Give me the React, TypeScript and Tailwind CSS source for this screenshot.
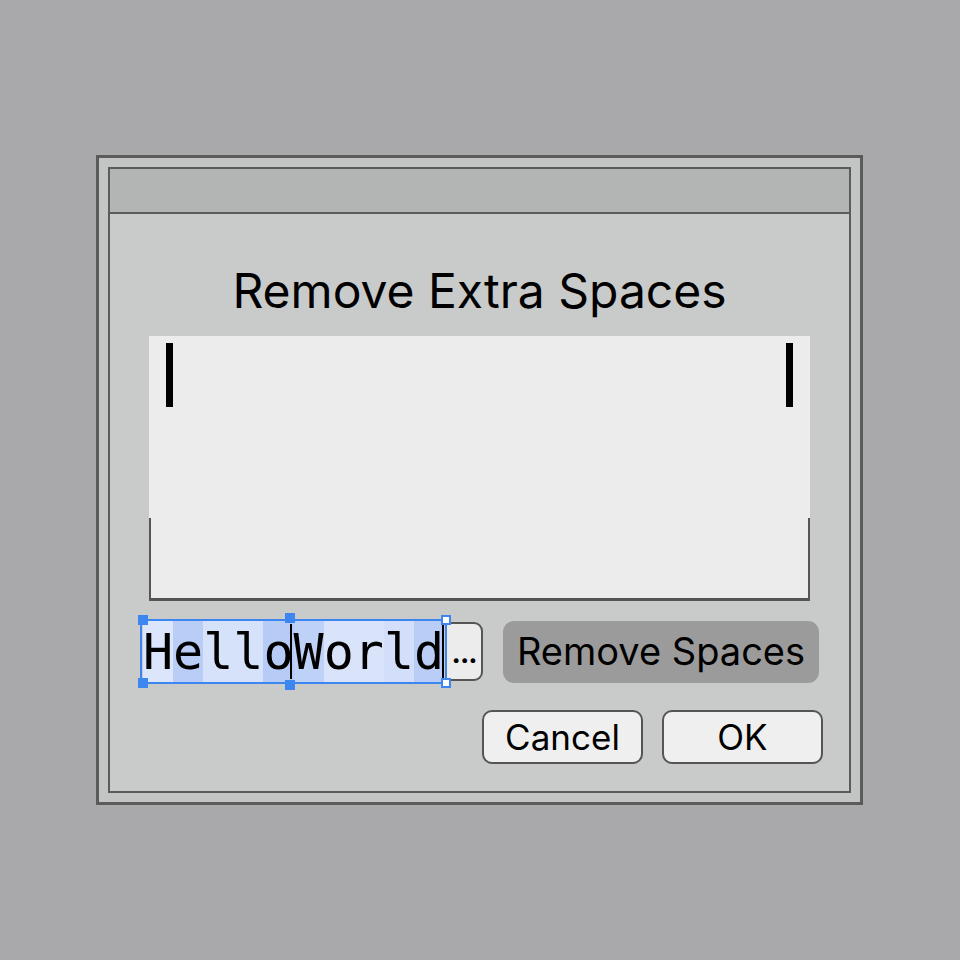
import React from 'react';

const chars: { c: string; bg: string }[] = [
  { c: 'H', bg: 'bg-[#dbe5fb]' },
  { c: 'e', bg: 'bg-[#b9cdf6]' },
  { c: 'l', bg: 'bg-[#d6e1fa]' },
  { c: 'l', bg: 'bg-[#d6e1fa]' },
  { c: 'o', bg: 'bg-[#b6cbf6]' },
  { c: 'W', bg: 'bg-[#bed1f7]' },
  { c: 'o', bg: 'bg-[#d9e4fb]' },
  { c: 'r', bg: 'bg-[#d9e4fb]' },
  { c: 'l', bg: 'bg-[#d3dffa]' },
  { c: 'd', bg: 'bg-[#b9cdf6]' },
];

function Handle({ className, hollow }: { className: string; hollow?: boolean }) {
  return (
    <span
      className={
        'absolute w-[10px] h-[10px] ' +
        (hollow ? 'bg-white border-2 border-[#3d86f0] ' : 'bg-[#3d86f0] ') +
        className
      }
    />
  );
}

export default function App() {
  return (
    <div
      className="w-[960px] h-[960px] bg-[#a9a9ab] pt-[155px] pl-[96px]"
      style={{ fontFamily: 'Inter, "Liberation Sans", sans-serif' }}
    >
      {/* Outer frame */}
      <div className="w-[767px] h-[650px] border-[3px] border-[#5b5b5b] bg-[#c3c4c4] p-[9px]">
        {/* Inner window */}
        <div className="w-[743px] h-[626px] border-2 border-[#5b5b5b] bg-[#c9caca] flex flex-col">
          <div className="h-[45px] bg-[#b3b5b5] border-b-2 border-[#5b5b5b]" />

          <h1 className="text-center text-[48px] leading-none text-black mt-[53px]">
            Remove Extra Spaces
          </h1>

          {/* Text area */}
          <div className="mx-[39px] mt-[21px] h-[265px] flex flex-col bg-[#ececec]">
            <div className="h-[182px] flex justify-between px-[17px] pt-[7px]">
              <span className="w-[7px] h-[64px] bg-black" />
              <span className="w-[7px] h-[64px] bg-black" />
            </div>
            <div className="flex-1 border-x-2 border-b-[3px] border-[#555]" />
          </div>

          {/* Input row */}
          <div className="flex items-center justify-between px-[30px] mt-[18px]">
            <div className="flex items-center">
              <div className="relative h-[65px] border-2 border-[#3d86f0] flex items-center px-[1px]">
                <div
                  className="flex h-full items-stretch text-[50px] leading-none text-black"
                  style={{ fontFamily: '"DejaVu Sans Mono", "Liberation Mono", monospace' }}
                >
                  {chars.map((ch, i) => (
                    <span key={i} className={'flex items-center ' + ch.bg}>
                      {ch.c}
                    </span>
                  ))}
                </div>
                <span className="absolute left-[148px] top-[3px] w-[2px] h-[55px] bg-black" />
                <span className="absolute right-[1px] top-[3px] w-[2px] h-[55px] bg-black" />
                <Handle className="-left-[4px] -top-[6px]" />
                <Handle className="left-[143px] -top-[8px]" />
                <Handle className="-left-[4px] -bottom-[6px]" />
                <Handle className="left-[143px] -bottom-[8px]" />
                <Handle hollow className="-right-[6px] -top-[6px]" />
                <Handle hollow className="-right-[6px] -bottom-[6px]" />
              </div>
              <div className="h-[59px] w-[36px] border-2 border-l-0 border-[#555] rounded-r-[9px] bg-[#ececec] flex items-end justify-center pb-[12px] text-[28px] font-bold leading-none tracking-[-1px] text-black">
                ...
              </div>
            </div>
            <button className="w-[316px] h-[62px] rounded-[11px] bg-[#9b9b9b] text-[38px] text-black flex items-center justify-center">
              Remove Spaces
            </button>
          </div>

          {/* Dialog buttons */}
          <div className="flex justify-end gap-[19px] pr-[26px] mt-[26px]">
            <button className="w-[161px] h-[54px] rounded-[10px] border-2 border-[#555] bg-[#efefef] text-[35px] text-black flex items-center justify-center">
              Cancel
            </button>
            <button className="w-[161px] h-[54px] rounded-[10px] border-2 border-[#555] bg-[#efefef] text-[35px] text-black flex items-center justify-center">
              OK
            </button>
          </div>
        </div>
      </div>
    </div>
  );
}
